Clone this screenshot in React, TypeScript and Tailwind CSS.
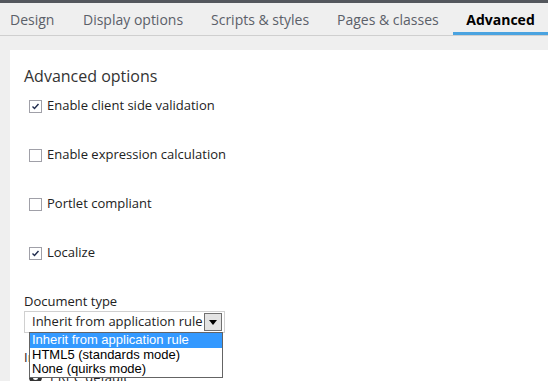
import React from "react";

const TABS = [
  { label: "Design", w: "w-[73px]" },
  { label: "Display options", w: "w-[128px]" },
  { label: "Scripts & styles", w: "w-[126px]" },
  { label: "Pages & classes", w: "flex-1" },
];

const OPTIONS = [
  { label: "Enable client side validation", checked: true },
  { label: "Enable expression calculation", checked: false },
  { label: "Portlet compliant", checked: false },
  { label: "Localize", checked: true },
];

function Checkbox({ checked }: { checked: boolean }) {
  return (
    <span className="flex h-[13px] w-[13px] shrink-0 items-center justify-center border border-[#a0a0a8] bg-white">
      {checked && (
        <svg width="9" height="9" viewBox="0 0 9 9">
          <path d="M1.5 4.5 L3.5 6.5 L7.5 2" fill="none" stroke="#1f2b4d" strokeWidth="1.4" />
        </svg>
      )}
    </span>
  );
}

export default function App() {
  return (
    <div
      className="h-[381px] w-[548px] overflow-hidden bg-[#efefef] text-[#333]"
      style={{ fontFamily: '"Open Sans", sans-serif' }}
    >
      <div className="h-[3px] bg-[#54575d]" />

      {/* Tabs */}
      <div className="flex h-[33px] border-b border-[#cfcfcf] pl-[10px]">
        {TABS.map((t) => (
          <div key={t.label} className={`${t.w} flex items-center whitespace-nowrap text-[14px] text-[#5b6069]`}>
            {t.label}
          </div>
        ))}
        <div className="flex w-[95px] shrink-0 items-center justify-center whitespace-nowrap border-b-[3px] border-[#4aa3e0] pt-[3px] text-[14px] font-bold text-black">
          Advanced
        </div>
      </div>

      <div className="h-[14px]" />

      {/* Panel */}
      <div className="relative ml-[10px] h-[331px] bg-white px-[14px] pt-[16px]">
        <h2 className="text-[16px] leading-[20px] text-[#333]">Advanced options</h2>

        <div className="mt-[11px] flex flex-col gap-[31px]">
          {OPTIONS.map((o) => (
            <label key={o.label} className="flex h-[18px] items-center gap-[5px] pl-[5px] text-[13px] text-[#222]">
              <Checkbox checked={o.checked} />
              {o.label}
            </label>
          ))}
        </div>

        <div className="mt-[30px] text-[13px] leading-[18px] text-[#222]">Document type</div>
        <div className="mt-[1px] flex h-[22px] w-[201px] items-center justify-between border border-[#d0d0d0] pl-[7px] pr-[2px] text-[13px] text-[#222]">
          <span className="whitespace-nowrap">Inherit from application rule</span>
          <span className="flex h-[18px] w-[18px] shrink-0 items-center justify-center border border-[#707070] bg-[#e3e3e3]">
            <svg width="8" height="5" viewBox="0 0 8 5">
              <path d="M0 0 H8 L4 5 Z" fill="#000" />
            </svg>
          </span>
        </div>

        <div className="mt-[15px] text-[13px] leading-[18px] text-[#222]">Initial mode</div>
        <div className="mt-[2px] flex items-center gap-[8px] pl-[5px] text-[13px] text-[#222]">
          <span className="h-[13px] w-[13px] shrink-0 rounded-full border-[4px] border-[#333] bg-white" />
          PRPC default
        </div>

        {/* Open dropdown list */}
        <div
          className="absolute left-[19px] top-[282px] w-[194px] border border-[#646464] bg-white text-[13px] leading-[14.7px] text-black"
          style={{ fontFamily: '"Liberation Sans", Arial, sans-serif' }}
        >
          <div className="whitespace-nowrap bg-[#3399ff] px-[2px] text-white">Inherit from application rule</div>
          <div className="whitespace-nowrap px-[2px]">HTML5 (standards mode)</div>
          <div className="whitespace-nowrap px-[2px]">None (quirks mode)</div>
        </div>
      </div>
    </div>
  );
}
